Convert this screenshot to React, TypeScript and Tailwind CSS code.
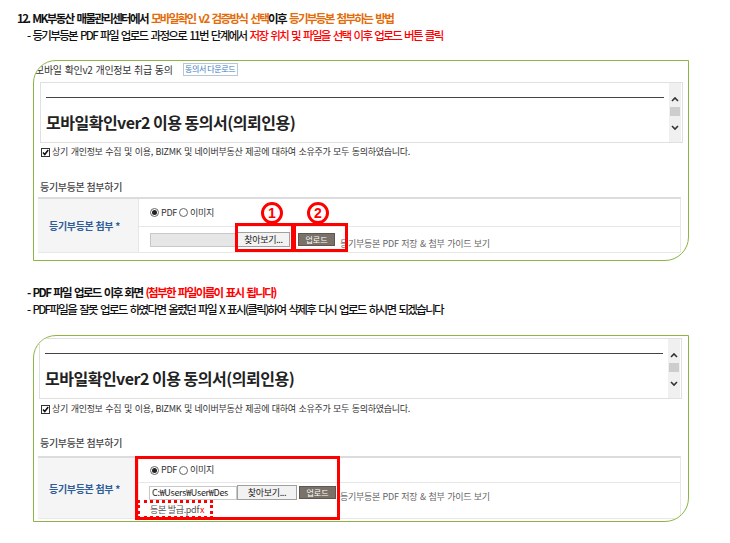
const ORANGE = "text-[#e36c09]";

const CheckBox = () => (
  <svg width="9" height="9" viewBox="0 0 9 9" className="shrink-0">
    <rect x="0.5" y="0.5" width="8" height="8" fill="#fff" stroke="#333" />
    <path d="M2 4.5 L3.8 6.5 L7.2 2" fill="none" stroke="#111" strokeWidth="1.6" />
  </svg>
);

const Radio = ({ on }: { on?: boolean }) => (
  <span className="flex h-[9px] w-[9px] shrink-0 items-center justify-center rounded-full border border-[#666] bg-white">
    {on && <span className="h-[5px] w-[5px] rounded-full bg-[#222]" />}
  </span>
);

const Chevron = ({ up }: { up?: boolean }) => (
  <svg width="8" height="6" viewBox="0 0 8 6">
    <path d={up ? "M1 5 L4 2 L7 5" : "M1 1 L4 4 L7 1"} fill="none" stroke="#333" strokeWidth="1.6" />
  </svg>
);

const ConsentBox = ({ className }: { className: string }) => (
  <div className={`flex h-[61px] w-[643px] border border-[#e0e0e0] bg-white ${className}`}>
    <div className="flex-1 pl-[5px] pr-[5px] pt-[14px]">
      <div className="h-px bg-[#444]" />
      <div className="mt-[14px] text-[16px] font-bold leading-[20px] tracking-[-0.5px] text-[#222]">
        모바일확인ver2 이용 동의서(의뢰인용)
      </div>
    </div>
    <div className="mr-px flex w-[12px] flex-col items-center bg-[#f0f0f0] pt-[13px]">
      <Chevron up />
      <div className="mt-[5px] h-[9px] w-[10px] bg-[#cdcdcd]" />
      <div className="mt-[9px]">
        <Chevron />
      </div>
    </div>
  </div>
);

const AgreeRow = ({ className }: { className: string }) => (
  <div className={`flex h-[16px] items-center gap-[2px] pl-[7px] ${className}`}>
    <CheckBox />
    <span className="text-[9px] tracking-[-0.3px] text-[#333] [word-spacing:1px]">
      상기 개인정보 수집 및 이용, BIZMK 및 네이버부동산 제공에 대하여 소유주가 모두 동의하였습니다.
    </span>
  </div>
);

const SectionLabel = ({ className }: { className: string }) => (
  <div className={`flex h-[16px] items-center pl-[6px] text-[10px] font-medium tracking-[-0.3px] text-[#444] ${className}`}>
    등기부등본 첨부하기
  </div>
);

const RadioRow = () => (
  <div className="flex items-center text-[9px] tracking-[-0.3px] text-[#333]">
    <Radio on />
    <span className="ml-[2px]">PDF</span>
    <span className="ml-[2px]">
      <Radio />
    </span>
    <span className="ml-[2px]">이미지</span>
  </div>
);

const GuideText = () => (
  <span className="text-[9px] tracking-[-0.3px] text-[#666] [word-spacing:1px]">
    등기부등본 PDF 저장 &amp; 첨부 가이드 보기
  </span>
);

const UploadBtn = ({ className }: { className: string }) => (
  <span className={`flex h-[13px] w-[37px] items-center justify-center border border-[#5e5650] bg-[#7a7169] text-[8px] text-white ${className}`}>
    업로드
  </span>
);

const HeaderCell = () => (
  <div className="flex w-[101px] items-center border-r border-[#e6e6e6] bg-[#f5f5f5] pl-[11px] text-[10px] font-bold tracking-[-0.3px] text-[#2f5d9a]">
    등기부등본 첨부 *
  </div>
);

const CircleNum = ({ n, className }: { n: string; className: string }) => (
  <div className={`absolute flex h-[22px] w-[22px] items-center justify-center rounded-full border-[3px] border-[#ff0000] font-['Liberation_Sans',sans-serif] text-[14px] font-bold leading-none text-[#ff0000] ${className}`}>
    {n}
  </div>
);

const Panel = ({ className, children }: { className: string; children: React.ReactNode }) => (
  <div className={`relative ml-[33px] w-[656px] overflow-hidden rounded-tl-[23px] rounded-br-[24px] border border-[#8cb543] bg-white ${className}`}>
    {children}
  </div>
);

export default function App() {
  return (
    <div className="h-[543px] w-[730px] bg-white font-['Noto_Sans_CJK_KR','Noto_Sans',sans-serif] text-[#111]">
      <div className="pt-[10px] text-[11.5px] leading-[17px] tracking-[-1.65px] [word-spacing:2px]">
        <div className="pl-[17px] font-bold">
          12. MK부동산 매물관리센터에서 <span className={ORANGE}>모바일확인 v2 검증방식 선택</span>이후{" "}
          <span className={ORANGE}>등기부등본 첨부하는 방법</span>
        </div>
        <div className="pl-[27px] font-medium">
          - 등기부등본 PDF 파일 업로드 과정으로 11번 단계에서{" "}
          <span className="text-[#ff0000]">저장 위치 및 파일을 선택 이후 업로드 버튼 클릭</span>
        </div>
      </div>

      <Panel className="mt-[16px] h-[201px]">
        <div className="flex h-[16px] items-center pl-[1px]">
          <span className="text-[10px] tracking-[-0.3px] text-[#333] [word-spacing:1px]">모바일 확인v2 개인정보 취급 동의</span>
          <span className="ml-[10px] flex h-[13px] w-[55px] items-center justify-center border border-[#b9c6d3] text-[8px] tracking-[-0.4px] text-[#3a7bbf]">
            동의서 다운로드
          </span>
        </div>
        <ConsentBox className="ml-[6px] mt-[5px]" />
        <AgreeRow className="mt-[1px]" />
        <SectionLabel className="mt-[18px]" />
        <div className="ml-[4px] mt-[3px] flex h-[56px] w-[643px] border-t-2 border-b border-r border-[#dcdcdc] border-b-[#e8e8e8] border-r-[#e8e8e8]">
          <HeaderCell />
          <div className="flex flex-1 flex-col">
            <div className="flex h-[28px] items-center border-b border-[#e8e8e8] pl-[11px]">
              <RadioRow />
            </div>
            <div className="flex flex-1 items-center pl-[11px]">
              <span className="h-[14px] w-[87px] border border-[#c8c8c8] bg-[#e6e6e6]" />
              <span className="flex h-[15px] w-[53px] items-center justify-center border border-[#a0a0a0] bg-[#f2f2f2] text-[9px] tracking-[-0.3px] text-[#222]">
                찾아보기...
              </span>
              <UploadBtn className="ml-[8px]" />
              <span className="ml-[5px]">
                <GuideText />
              </span>
            </div>
          </div>
        </div>
        <div className="absolute left-[201px] top-[162px] h-[29px] w-[59px] border-[3px] border-[#ff0000]" />
        <div className="absolute left-[259px] top-[162px] h-[29px] w-[55px] border-[3px] border-[#ff0000]" />
        <CircleNum n="1" className="left-[227px] top-[141px]" />
        <CircleNum n="2" className="left-[273px] top-[141px]" />
      </Panel>

      <div className="mt-[23px] text-[11.5px] leading-[17px] tracking-[-1.65px] [word-spacing:2px]">
        <div className="pl-[27px] font-bold">
          - PDF 파일 업로드 이후 화면 <span className="text-[#ff0000]">(첨부한 파일이름이 표시 됩니다)</span>
        </div>
        <div className="pl-[27px] font-medium">
          - PDF파일을 잘못 업로드 하였다면 올렸던 파일 X 표시(클릭)하여 삭제후 다시 업로드 하시면 되겠습니다
        </div>
      </div>

      <Panel className="mt-[17px] h-[187px]">
        <ConsentBox className="ml-[5px] mt-[2px]" />
        <AgreeRow className="mt-[2px]" />
        <SectionLabel className="mt-[17px]" />
        <div className="ml-[4px] mt-[6px] flex h-[63px] w-[643px] border-t-2 border-b border-r border-[#dcdcdc] border-b-[#e8e8e8] border-r-[#e8e8e8]">
          <HeaderCell />
          <div className="flex flex-1 flex-col">
            <div className="flex h-[25px] items-center border-b border-[#e8e8e8] pl-[11px]">
              <RadioRow />
            </div>
            <div className="flex h-[19px] items-center pl-[10px]">
              <span className="flex h-[14px] w-[88px] items-center overflow-hidden border border-[#c8c8c8] bg-white pl-[2px] text-[9px] tracking-[-0.3px] text-[#222]">
                C:₩Users₩User₩Des
              </span>
              <span className="flex h-[15px] w-[60px] items-center justify-center border border-[#a0a0a0] bg-[#f2f2f2] text-[9px] tracking-[-0.3px] text-[#222]">
                찾아보기...
              </span>
              <UploadBtn className="ml-[2px]" />
              <span className="ml-[4px]">
                <GuideText />
              </span>
            </div>
            <div className="flex flex-1 items-center pl-[11px] text-[9px] tracking-[-0.3px] text-[#555]">
              등본 발급.pdf<span className="ml-[1px] text-[#ff0000]">x</span>
            </div>
          </div>
        </div>
        <div className="absolute left-[101px] top-[120px] h-[64px] w-[205px] border-[3px] border-[#ff0000]" />
        <div className="absolute left-[103px] top-[164px] h-[19px] w-[76px] border-[3px] border-dotted border-[#ff0000]" />
      </Panel>
    </div>
  );
}
